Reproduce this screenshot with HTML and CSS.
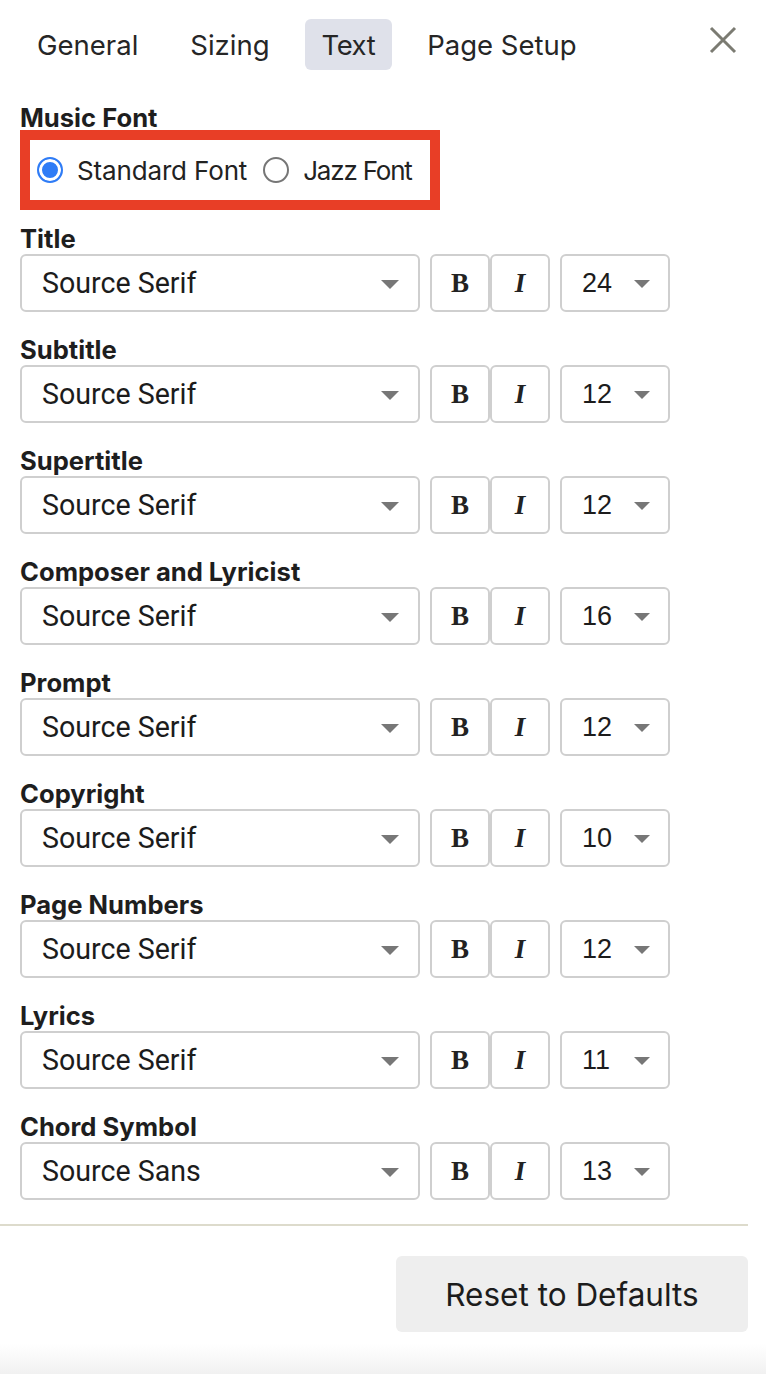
FILE: index.html
```html
<!DOCTYPE html>
<html>
<head>
<meta charset="utf-8">
<link rel="stylesheet" href="styles.css">
</head>
<body>
<div class="panel">
  <div class="tabs">
    <div class="tab">General</div>
    <div class="tab">Sizing</div>
    <div class="tab active">Text</div>
    <div class="tab">Page Setup</div>
    <div class="close">
      <svg width="28" height="28" viewBox="0 0 28 28"><path d="M2 2 L26 26 M26 2 L2 26" stroke="#7b7b72" stroke-width="3" fill="none"/></svg>
    </div>
  </div>

  <div class="content">
    <div class="label music">Music Font</div>
    <div class="radios">
      <label class="radio"><span class="dot checked"></span><span>Standard Font</span></label>
      <label class="radio"><span class="dot"></span><span class="jazz">Jazz Font</span></label>
    </div>

    <div class="row">
      <div class="label">Title</div>
      <div class="controls">
        <div class="select font"><span>Source Serif</span><span class="arrow"></span></div>
        <div class="styles"><div class="sbtn b">B</div><div class="sbtn i">I</div></div>
        <div class="select size"><span>24</span><span class="arrow sm"></span></div>
      </div>
    </div>
    <div class="row">
      <div class="label">Subtitle</div>
      <div class="controls">
        <div class="select font"><span>Source Serif</span><span class="arrow"></span></div>
        <div class="styles"><div class="sbtn b">B</div><div class="sbtn i">I</div></div>
        <div class="select size"><span>12</span><span class="arrow sm"></span></div>
      </div>
    </div>
    <div class="row">
      <div class="label">Supertitle</div>
      <div class="controls">
        <div class="select font"><span>Source Serif</span><span class="arrow"></span></div>
        <div class="styles"><div class="sbtn b">B</div><div class="sbtn i">I</div></div>
        <div class="select size"><span>12</span><span class="arrow sm"></span></div>
      </div>
    </div>
    <div class="row">
      <div class="label">Composer and Lyricist</div>
      <div class="controls">
        <div class="select font"><span>Source Serif</span><span class="arrow"></span></div>
        <div class="styles"><div class="sbtn b">B</div><div class="sbtn i">I</div></div>
        <div class="select size"><span>16</span><span class="arrow sm"></span></div>
      </div>
    </div>
    <div class="row">
      <div class="label">Prompt</div>
      <div class="controls">
        <div class="select font"><span>Source Serif</span><span class="arrow"></span></div>
        <div class="styles"><div class="sbtn b">B</div><div class="sbtn i">I</div></div>
        <div class="select size"><span>12</span><span class="arrow sm"></span></div>
      </div>
    </div>
    <div class="row">
      <div class="label">Copyright</div>
      <div class="controls">
        <div class="select font"><span>Source Serif</span><span class="arrow"></span></div>
        <div class="styles"><div class="sbtn b">B</div><div class="sbtn i">I</div></div>
        <div class="select size"><span>10</span><span class="arrow sm"></span></div>
      </div>
    </div>
    <div class="row">
      <div class="label">Page Numbers</div>
      <div class="controls">
        <div class="select font"><span>Source Serif</span><span class="arrow"></span></div>
        <div class="styles"><div class="sbtn b">B</div><div class="sbtn i">I</div></div>
        <div class="select size"><span>12</span><span class="arrow sm"></span></div>
      </div>
    </div>
    <div class="row">
      <div class="label">Lyrics</div>
      <div class="controls">
        <div class="select font"><span>Source Serif</span><span class="arrow"></span></div>
        <div class="styles"><div class="sbtn b">B</div><div class="sbtn i">I</div></div>
        <div class="select size"><span>11</span><span class="arrow sm"></span></div>
      </div>
    </div>
    <div class="row">
      <div class="label">Chord Symbol</div>
      <div class="controls">
        <div class="select font"><span>Source Sans</span><span class="arrow"></span></div>
        <div class="styles"><div class="sbtn b">B</div><div class="sbtn i">I</div></div>
        <div class="select size"><span>13</span><span class="arrow sm"></span></div>
      </div>
    </div>
  </div>

  <div class="divider"></div>
  <div class="footer">
    <div class="reset">Reset to Defaults</div>
  </div>
</div>
<div class="fade"></div>
</body>
</html>
```

FILE: styles.css
```css
html, body {
  margin: 0;
  padding: 0;
  background: #fff;
}
body {
  font-family: Inter, "Noto Sans", sans-serif;
  color: #222;
  overflow: hidden;
}
.panel {
  width: 748px;
}
.tabs {
  display: flex;
  align-items: center;
  gap: 18px;
  padding: 19px 11px 0 20px;
  height: 51px;
}
.tab {
  font-size: 27.5px;
  line-height: 49px;
  height: 49px;
  padding: 2px 17px 0;
  border-radius: 6px;
  color: #262626;
}
.tab.active {
  background: #dfe1ea;
  letter-spacing: -0.5px;
}
.close {
  margin-left: auto;
  width: 28px;
  height: 28px;
  margin-top: -9px;
}
.close svg {
  display: block;
}
.content {
  padding: 36px 0 0 20px;
}
.label {
  font-weight: 700;
  font-size: 25.6px;
  line-height: 24px;
  height: 24px;
  color: #1e1e1e;
}
.radios {
  height: 60px;
  border: 10px solid #e83e26;
  display: flex;
  align-items: center;
  padding-left: 7px;
  box-sizing: content-box;
  width: 393px;
  gap: 16px;
}
.radio {
  display: flex;
  align-items: center;
  gap: 14px;
  font-size: 26px;
  color: #222;
}
.radio:first-child {
  letter-spacing: -0.15px;
}
.jazz {
  letter-spacing: -1.2px;
}
.dot {
  width: 22px;
  height: 22px;
  border-radius: 50%;
  border: 2px solid #767676;
  box-sizing: content-box;
  background: #fff;
}
.dot.checked {
  border: 2px solid #2f7cf6;
  background: #2f7cf6;
  box-shadow: inset 0 0 0 3px #fff;
}
.row {
  margin-top: 17px;
}
.row + .row {
  margin-top: 26px;
}
.row .label {
  margin-bottom: 3px;
}
.controls {
  display: flex;
  align-items: center;
}
.select {
  box-sizing: border-box;
  height: 58px;
  border: 2px solid #cfcfcf;
  border-radius: 6px;
  display: flex;
  align-items: center;
  justify-content: space-between;
  font-family: Roboto, "Liberation Sans", sans-serif;
  font-size: 28.6px;
  color: #1c1c1c;
}
.select.font {
  width: 400px;
  padding: 0 19px 0 20px;
}
.select.size {
  width: 110px;
  padding: 0 18px 0 20px;
  margin-left: 10px;
  font-family: "Liberation Sans", Arial, sans-serif;
  font-size: 27px;
}
.arrow {
  width: 0;
  height: 0;
  border-left: 9px solid transparent;
  border-right: 9px solid transparent;
  border-top: 9px solid #777;
  margin-top: 2px;
}
.arrow.sm {
  border-left-width: 8px;
  border-right-width: 8px;
  border-top-width: 8px;
}
.styles {
  display: flex;
  margin-left: 10px;
}
.sbtn {
  box-sizing: border-box;
  width: 60px;
  height: 58px;
  border: 2px solid #cfcfcf;
  border-radius: 6px;
  display: flex;
  align-items: center;
  justify-content: center;
  font-family: "Liberation Serif", "DejaVu Serif", serif;
  font-size: 27px;
  color: #222;
}
.sbtn.b {
  font-weight: 700;
}
.sbtn.i {
  font-style: italic;
  font-weight: 700;
}
.divider {
  height: 2px;
  background: #dddbcc;
  margin-top: 24px;
}
.footer {
  display: flex;
  justify-content: flex-end;
  padding-top: 30px;
}
.reset {
  width: 352px;
  height: 76px;
  background: #eeeeee;
  border-radius: 6px;
  display: flex;
  align-items: center;
  justify-content: center;
  font-size: 31.5px;
  color: #1c1c1c;
}
.fade {
  height: 30px;
  margin-top: 12px;
  background: linear-gradient(#ffffff, #f1f1f1);
}
```
